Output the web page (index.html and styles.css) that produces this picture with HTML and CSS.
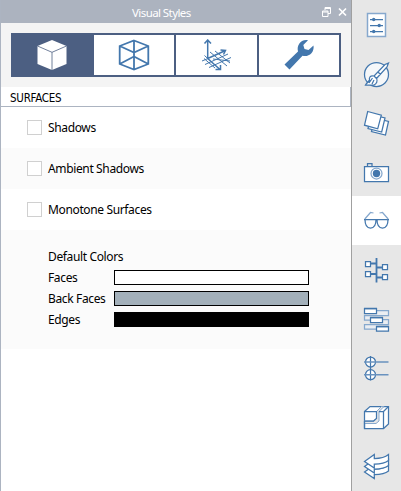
FILE: index.html
```html
<!DOCTYPE html>
<html lang="en">
<head>
<meta charset="utf-8">
<title>Visual Styles</title>
<link rel="stylesheet" href="styles.css">
</head>
<body>
<main class="panel">
  <header class="titlebar">
    <h1 class="title"><span>Visual Styles</span></h1>
    <svg class="window-buttons" width="26" height="11" viewBox="0 0 26 11"><path d="M3 3V.5H8.5V6.5H6M3 1.5H8.5M.5 4H6V9.500H.5ZM.5 5H6" fill="none" stroke="#fff"/><path d="M17 1.500L24 8.500M24 1.500L17 8.500" stroke="#fff" stroke-width="1.7"/></svg>
  </header>
  <nav class="tabs">
    <div class="tab tab-active"><svg class="tab-icon" viewBox="0 0 32 32"><path d="M16 1L30.500 7V25L16 31L1.500 25V7Z" fill="#fff"/><path d="M1.500 7L16 13.300L30.500 7M16 13.300V31" fill="none" stroke="#4c5f82" stroke-width=".8"/></svg></div>
    <div class="tab"><svg class="tab-icon line" viewBox="0 0 32 32"><path stroke-width="1.800" d="M16 1.500L30.300 7V25L16 30.500L1.700 25V7ZM16 1.500V30.500M1.700 7L16 13.500L30.300 7M1.700 25L16 17.500L30.300 25M1.700 7"/></svg></div>
    <div class="tab"><svg class="tab-icon line" viewBox="0 0 32 32"><path stroke-width="1.500" d="M6.700 20V1M3.500 4.500L6.700 1L10 4.500M6.700 19.500L24.500 11.500M19.500 11L24.500 11.500L22.500 15.500M6.700 19.500L19 30.500M14.500 30.500H19.500V26"/><path stroke-width="1" d="M1 22L7 19.500M3.500 16.500L6.700 19.500M4 25.500L27 15M8 28.500L30 18.500M12 20L29 22M9 13L26 27M14 12L29 24M3 19.500L14 29"/></svg></div>
    <div class="tab"><svg class="tab-icon" viewBox="0 0 32 32"><path fill="#4377ad" d="M1.500 25.500L15 12.500C13.500 6.500 17.500 0 25 1.200L20.300 6L21.500 10L25.500 11L30.500 6.500C31.700 14 25 18.500 19.500 16.700L6.500 30.500Z"/></svg></div>
  </nav>
  <h2 class="section"><span>SURFACES</span></h2>
  <div class="option"><i class="check"></i><span class="label">Shadows</span></div>
  <div class="option shaded"><i class="check"></i><span class="label">Ambient Shadows</span></div>
  <div class="option"><i class="check"></i><span class="label">Monotone Surfaces</span></div>
  <section class="colors">
    <div class="color-row"><span class="label">Default Colors</span></div>
    <div class="color-row"><span class="label color-label">Faces</span><i class="swatch face"></i></div>
    <div class="color-row"><span class="label color-label">Back Faces</span><i class="swatch back"></i></div>
    <div class="color-row"><span class="label color-label">Edges</span><i class="swatch edge"></i></div>
  </section>
</main>
<aside class="toolbar">
  <div class="tool"><svg class="line" viewBox="0 0 49 49"><rect x="15.500" y="13.500" width="18" height="23" fill="#fff" stroke="#86a8cd" stroke-width="1.500"/><path d="M18 19.500H31M18 25.500H31M18 31.500H31"/><g fill="#4377ad" stroke="none"><circle cx="21.700" cy="19.500" r="1.700"/><circle cx="27.200" cy="25.500" r="1.700"/><circle cx="21.700" cy="31.500" r="1.700"/></g></svg></div>
  <div class="tool"><svg class="line" viewBox="0 0 49 49"><circle cx="24.500" cy="25.500" r="12" fill="#f5f7f9"/><path fill="#fff" d="M36.500 14L33 15.500L22 27L24.500 29.500L35 18ZM26 23L28.500 25.500M22 27C18 26 17 29 17.500 31C16.500 34 15 33 13.500 36H22C24.500 35 26 32 24.500 29.500Z"/><path d="M17 34L20.500 29M20 35L22 31M15 34L18 31"/></svg></div>
  <div class="tool"><svg class="line" viewBox="0 0 49 49"><g fill="#fff"><path d="M22.700 20L36.500 23.500L33.500 37L19.500 33.500Z"/><path d="M19.200 16.500L33 20L29.700 34L16 30.500Z"/><path d="M15.700 13.500L29.300 17.200L25.700 30.800L12.500 27.200Z"/></g></svg></div>
  <div class="tool"><svg class="line" viewBox="0 0 49 49"><path fill="#fff" d="M12.500 19.500H36.500V34.500H12.500Z"/><path d="M15.500 19V16.500H20V19"/><circle cx="24.500" cy="26.500" r="5.500" fill="#fff" stroke="#86a8cd"/><circle cx="24.500" cy="26.500" r="3.700" fill="#4377ad" stroke="none"/></svg></div>
  <div class="tool tool-active"><svg class="line" viewBox="0 0 49 49"><path d="M12 23.500H37M13 23.500C13 29 15 32 18.500 32S24 29 24 23.500M25 23.500C25 29 27 32 30.500 32S36 29 36 23.500"/><path stroke="#86a8cd" d="M12.800 23L18.500 16.500L21.500 17M27.500 17L30.500 16.500L36.200 23"/></svg></div>
  <div class="tool"><svg class="line" viewBox="0 0 49 49"><path stroke-width="1.800" d="M24.500 13V37.500M18.500 18.500H24.500M18.500 29H24.500M24.500 22.500H30M24.500 32.500H30"/><path fill="#fff" d="M13.500 16.500H18.500V21.500H13.500ZM13.500 26.500H18.500V31.500H13.500ZM30.500 19.500H35.500V24.500H30.500ZM30.500 29.500H35.500V34.500H30.500Z"/></svg></div>
  <div class="tool"><svg class="line" viewBox="0 0 49 49"><path stroke="#86a8cd" fill="#ebeef2" d="M24.500 16.500H36.500V21.500H12.500V26H19M30 25.500H36.500V30.500H12.500V35H24.500"/><path fill="#fff" d="M12.500 14.500H24.500V19.500H12.500ZM18.500 23.500H30.500V28.500H18.500ZM24.500 32.500H36.500V37H24.500Z"/><path stroke-width="1.600" d="M12 14.500H25M18 23.500H31M24 32.500H37"/></svg></div>
  <div class="tool"><svg class="line" viewBox="0 0 49 49"><circle cx="18.500" cy="19" r="5" fill="#fff"/><circle cx="18.500" cy="31.700" r="5" fill="#fff"/><path d="M18.500 13V37.500"/><path stroke-width="1.500" d="M12 19H36.500M12 31.700H36.500" stroke="#6992bf"/></svg></div>
  <div class="tool"><svg class="line" viewBox="0 0 49 49"><path fill="#fff" d="M12.500 19.500L18 14.500H36.500V32L31.500 36.500H12.500Z"/><path fill="#e7e7e7" stroke="#86a8cd" stroke-width="1" d="M24.500 19.500L29.500 14.500H32L27 19.500V29L24 31.500H12.500V29H21.500L24.500 26.500Z"/><path d="M12.500 19.500H24.500V26.500L21.500 29H12.500M27 19.500H31.500V36.500M31.500 19.500L36.500 14.500M12.500 29V36.500"/></svg></div>
  <div class="tool"><svg class="line" viewBox="0 0 49 49"><g fill="#fff"><path d="M12.500 31L22.300 24V28C28 28 33 27 36.500 24V30C33 33 28 33.500 22.300 33.500V37.500Z"/><path d="M12.500 25.500L22.300 18.500V22.500C28 22.500 33 21.500 36.500 18.500V24.500C33 27.500 28 28 22.300 28V32Z"/><path d="M12.500 20.500L22.300 13.500V17.500C28 17.500 33 16.500 36.500 13.500V19.500C33 22.500 28 23 22.300 23V27Z"/></g></svg></div>
</aside>
</body>
</html>
```
FILE: styles.css
```css
* { box-sizing: border-box; }
body {
  margin: 0;
  width: 401px;
  height: 491px;
  display: flex;
  overflow: hidden;
  font: 12px/16px "Noto Sans", sans-serif;
  color: #000;
  background: #fff;
}
.panel { width: 352px; border-left: 1px solid #acb4c1; border-right: 1px solid #a0a0a0; }
.titlebar {
  height: 23px;
  display: flex;
  align-items: center;
  background: #acb3bf;
  color: #fff;
  padding-left: 131px;
}
.title { margin: 0; width: 190px; padding-top: 2px; font: 11.5px/16px "Noto Sans", sans-serif; letter-spacing: -.58px; }
.window-buttons { margin-top: 2px; }
.tabs {
  height: 64px;
  padding: 10px 9px 10px 10px;
  background: #f4f4f4;
  display: grid;
  grid-template-columns: 83px 82px 83px 82px;
}
.tab {
  display: flex;
  align-items: center;
  justify-content: center;
  background: #fff;
  border: solid #4c5f82;
  border-width: 2px 2px 2px 0;
}
.tab-active { background: #4c5f82; }
.tab-icon { width: 32px; height: 32px; }
.line { fill: none; stroke: #4377ad; stroke-width: 1.25; }
.section {
  margin: 0;
  height: 20px;
  padding: 3px 0 0 9px;
  border-right: 1px solid #acb4c1;
  border-bottom: 1px solid #acb4c1;
  font: 11.5px/16px "DejaVu Sans Condensed", sans-serif;
  letter-spacing: -.25px;
}
.option { height: 41px; display: flex; align-items: center; padding-left: 26px; gap: 6px; }
.shaded, .colors { background: #fbfbfb; }
.check { width: 15px; height: 15px; border: 1px solid #d0d0d0; background: #fff; }
.label { padding-top: 1px; letter-spacing: -.36px; }
.colors { height: 119px; padding: 16px 0 0 47px; }
.color-row { height: 21px; display: flex; align-items: center; }
.color-label { width: 66px; }
.swatch { width: 195px; height: 15px; border: 1px solid #000; background: #fff; }
.back { background: #a3b0ba; }
.edge { background: #000; }
.toolbar { width: 49px; background: #e7e7e7; }
.tool { height: 49px; }
.tool-active { background: #fff; }
.tool svg { display: block; width: 49px; height: 49px; }
```
